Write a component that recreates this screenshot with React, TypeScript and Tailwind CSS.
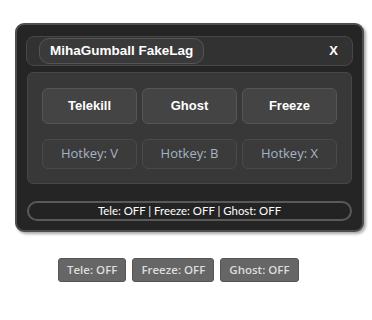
import React from "react";

export default function App() {
  const font = { fontFamily: '"Open Sans", "Noto Sans", sans-serif' };
  return (
    <div className="w-[372px] h-[320px] bg-white relative" style={font}>
      <div className="pt-[23px] pl-[15px]">
        <div className="w-[349px] h-[209px] rounded-[9px] border-2 border-[#4e4e4e] bg-[#252525] shadow-[2px_2px_3px_rgba(0,0,0,0.35)] pt-[11px] px-[9px] flex flex-col">
          {/* title bar */}
          <div className="h-[30px] rounded-[8px] border border-[#474747] bg-[#323232] flex items-center pl-[12px] pr-[14px]">
            <div
              className="h-[26px] rounded-[10px] border border-[#555] bg-[#3a3a3a] flex items-center px-[10px] text-white font-bold text-[13.5px]"
              style={{ fontFamily: '"Liberation Sans", Arial, sans-serif' }}
            >
              MihaGumball FakeLag
            </div>
            <div className="flex-1" />
            <div
              className="text-white font-bold text-[13px]"
              style={{ fontFamily: '"Liberation Sans", Arial, sans-serif' }}
            >
              X
            </div>
          </div>
          {/* content */}
          <div className="mt-[6px] mx-[1px] h-[112px] rounded-[6px] border border-[#474747] bg-[#383838] px-[14px] pt-[15px] flex flex-col gap-[15px]">
            <div className="flex gap-[5px]">
              {["Telekill", "Ghost", "Freeze"].map((t) => (
                <div
                  key={t}
                  className="flex-1 h-[36px] rounded-[6px] border border-[#565656] bg-[#444444] flex items-center justify-center text-white font-bold text-[13px]"
                  style={{ fontFamily: '"Liberation Sans", Arial, sans-serif' }}
                >
                  {t}
                </div>
              ))}
            </div>
            <div className="flex gap-[5px]">
              {["Hotkey: V", "Hotkey: B", "Hotkey: X"].map((t) => (
                <div
                  key={t}
                  className="flex-1 h-[30px] rounded-[6px] border border-[#4a4a4a] bg-[#3b3b3b] flex items-center justify-center text-[#a4b4c4] text-[13px]"
                >
                  {t}
                </div>
              ))}
            </div>
          </div>
          {/* status */}
          <div
            className="mt-[17px] mx-[1px] h-[20px] rounded-full border-2 border-[#5a5a5a] bg-[#232323] flex items-center justify-center text-white text-[11.4px] leading-none"
            style={{ fontFamily: 'Lato, "Open Sans", sans-serif' }}
          >
            Tele: OFF | Freeze: OFF | Ghost: OFF
          </div>
        </div>
      </div>
      <div className="mt-[26px] pl-[58px] flex gap-[6px]">
        {["Tele: OFF", "Freeze: OFF", "Ghost: OFF"].map((t) => (
          <div
            key={t}
            className="h-[24px] px-[8px] rounded-[3px] border border-[#555] bg-[#666666] flex items-center text-[#dddddd] text-[11.5px] font-semibold"
          >
            {t}
          </div>
        ))}
      </div>
    </div>
  );
}
